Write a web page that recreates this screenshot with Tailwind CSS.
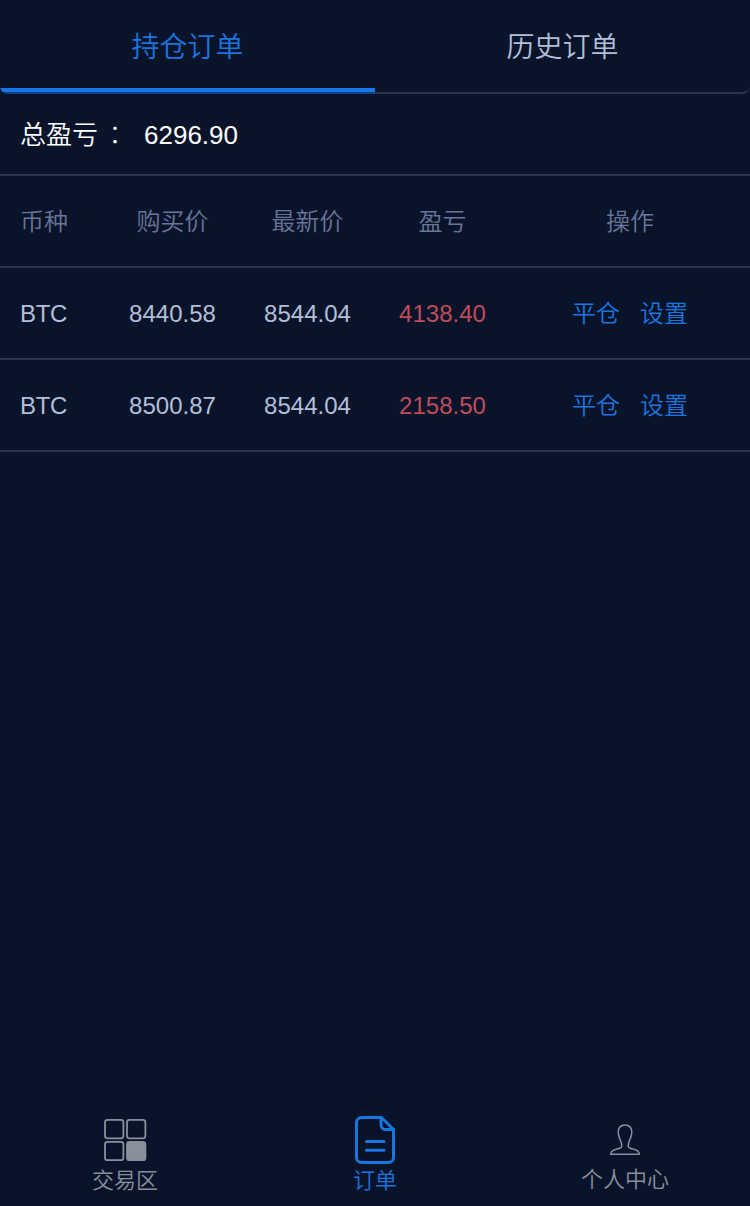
<!DOCTYPE html>
<html lang="zh-CN">
<head>
  <meta charset="UTF-8" />
  <meta name="viewport" content="width=device-width, initial-scale=1.0"/>
  <title>订单</title>
  <script src="https://cdn.jsdelivr.net/npm/@tailwindcss/browser@4"></script>
</head>
<body class="bg-[#09142a] text-[#b3bfd8] h-screen flex flex-col overflow-hidden font-['Liberation_Sans','Noto_Sans_CJK_SC',sans-serif] font-[350]">
  <!-- Tabs -->
  <div class="flex h-[94px] rounded-b-lg overflow-hidden text-[28px]">
    <div class="w-1/2 border-b-2 border-[#0f4387]">
      <button class="w-full h-[92px] border-b-4 border-[#1677e6] text-[#1a75e0] pt-2">持仓订单</button>
    </div>
    <button class="w-1/2 h-[94px] border-b-2 border-[#2b3552] rounded-br-lg pt-1">历史订单</button>
  </div>

  <!-- Total -->
  <div class="flex items-center h-[82px] border-b-2 border-[#2b3552] pl-5 pt-[3px] text-[26px] text-white">
    <span>总盈亏</span>
    <span class="w-[46px] pl-1 pb-1 font-['Noto_Sans_CJK_TC',sans-serif] font-light leading-8" lang="zh-TW">：</span>
    <span>6296.90</span>
  </div>

  <!-- Orders -->
  <div class="text-2xl text-center">
    <div class="grid grid-cols-[105px_135px_135px_135px_240px] items-center h-[92px] border-b-2 border-[#2b3552] pt-0.5 text-[#69749a]">
      <span class="text-left pl-5">币种</span>
      <span>购买价</span>
      <span>最新价</span>
      <span>盈亏</span>
      <span>操作</span>
    </div>
    <div class="grid grid-cols-[105px_135px_135px_135px_240px] items-center h-[92px] border-b-2 border-[#2b3552] pt-0.5">
      <span class="text-left pl-5 tracking-[-0.3px]">BTC</span>
      <span>8440.58</span>
      <span>8544.04</span>
      <span class="text-[#c04c5a]">4138.40</span>
      <div class="flex justify-center gap-5 text-[#1a75e0]">
        <button>平仓</button>
        <button>设置</button>
      </div>
    </div>
    <div class="grid grid-cols-[105px_135px_135px_135px_240px] items-center h-[92px] border-b-2 border-[#2b3552] pt-0.5">
      <span class="text-left pl-5 tracking-[-0.3px]">BTC</span>
      <span>8500.87</span>
      <span>8544.04</span>
      <span class="text-[#c04c5a]">2158.50</span>
      <div class="flex justify-center gap-5 text-[#1a75e0]">
        <button>平仓</button>
        <button>设置</button>
      </div>
    </div>
  </div>

  <!-- Bottom nav -->
  <div class="mt-auto grid grid-cols-3 h-[98px] text-[22px] leading-[34px] text-[#8a8f9c]">
    <a class="flex flex-col items-center pt-1.5">
      <svg class="w-[50px] h-[50px]" viewBox="0 0 50 50" fill="none" stroke="currentColor" stroke-width="1.8">
        <rect x="5" y="5.9" width="18.4" height="18.4" rx="2.5"/>
        <rect x="27" y="5.9" width="18.4" height="18.4" rx="2.5"/>
        <rect x="5" y="27.8" width="18.4" height="18.4" rx="2.5"/>
        <rect x="27" y="27.8" width="18.4" height="18.4" rx="2.5" fill="currentColor"/>
      </svg>
      <span>交易区</span>
    </a>
    <a class="flex flex-col items-center pt-1.5 text-[#1a75e0]">
      <svg class="w-[50px] h-[50px]" viewBox="0 0 50 50" fill="none" stroke="currentColor" stroke-width="3" stroke-linecap="round" stroke-linejoin="round">
        <path d="M31.5 3.5h-20a5 5 0 0 0-5 5v35a5 5 0 0 0 5 5h27a5 5 0 0 0 5-5v-28z"/>
        <path d="M31 3.6v7.4a4.5 4.5 0 0 0 4.5 4.5h8"/>
        <path d="M16.5 27.5h17.5M16.5 36.3h17.5"/>
      </svg>
      <span>订单</span>
    </a>
    <a class="flex flex-col items-center pt-1.5">
      <svg class="w-[50px] h-[50px]" viewBox="0 0 50 50" fill="none" stroke="currentColor" stroke-width="1.5" stroke-linejoin="round">
        <path d="M21.8 32C21.8 26.500 18.2 24 18.2 18.5C18.2 13.7 20.7 11 25 11S31.8 13.7 31.8 18.5C31.8 24 28.2 26.500 28.2 32C28.2 36.5 39.3 33.5 39.3 40.3H10.7C10.7 33.5 21.8 36.5 21.8 32Z"/>
      </svg>
      <span class="leading-8">个人中心</span>
    </a>
  </div>
</body>
</html>
